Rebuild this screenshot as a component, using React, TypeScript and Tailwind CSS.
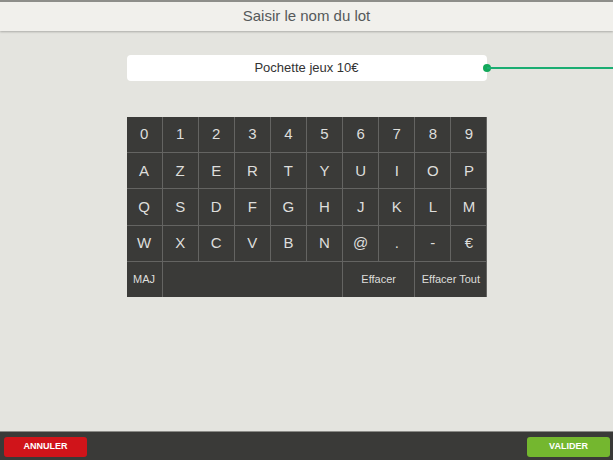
import { useState } from "react";

const rows = [
  ["0", "1", "2", "3", "4", "5", "6", "7", "8", "9"],
  ["A", "Z", "E", "R", "T", "Y", "U", "I", "O", "P"],
  ["Q", "S", "D", "F", "G", "H", "J", "K", "L", "M"],
  ["W", "X", "C", "V", "B", "N", "@", ".", "-", "€"],
];

export default function App() {
  const [value, setValue] = useState("Pochette jeux 10€");
  const [upper, setUpper] = useState(true);

  const press = (k: string) => setValue((v) => v + (upper ? k : k.toLowerCase()));

  return (
    <div className="flex h-[460px] w-full flex-col overflow-hidden bg-[#e4e4df] font-['Liberation_Sans',Arial,sans-serif]">
      <header className="relative z-10 flex h-[31px] shrink-0 items-center justify-center border-t-2 border-[#8e8e8a] bg-[#f1f0ec] shadow-[0_1px_2px_rgba(0,0,0,0.25)]">
        <h1 className="text-[15px] text-[#55595a]">Saisir le nom du lot</h1>
      </header>

      <main className="flex flex-1 flex-col items-center pt-[24px]">
        <div className="relative w-[360px]">
          <div className="flex h-[26px] items-center justify-center rounded-[4px] bg-white text-[13px] text-[#333]">
            {value}
          </div>
          {/* connector going off to the right edge */}
          <span className="absolute left-[356px] top-[9px] h-2 w-2 rounded-full bg-[#12a85a]" />
          <span className="absolute left-[360px] top-[12px] h-[2px] w-[200px] bg-[#1aad72]" />
        </div>

        <div className="mt-[36px] grid h-[180px] w-[360px] grid-cols-10 grid-rows-5 gap-px bg-[#646462] text-[15px] text-[#dededc]">
          {rows.flat().map((k) => (
            <button key={k} onClick={() => press(k)} className="flex items-center justify-center bg-[#3a3a38]">
              {k}
            </button>
          ))}
          <button onClick={() => setUpper((u) => !u)} className="flex items-center justify-center bg-[#3a3a38] text-[11px]">
            MAJ
          </button>
          <button onClick={() => setValue((v) => v + " ")} className="col-span-5 bg-[#3a3a38]" />
          <button onClick={() => setValue((v) => v.slice(0, -1))} className="col-span-2 flex items-center justify-center bg-[#3a3a38] text-[11px]">
            Effacer
          </button>
          <button onClick={() => setValue("")} className="col-span-2 flex items-center justify-center bg-[#3a3a38] text-[11px]">
            Effacer Tout
          </button>
        </div>
      </main>

      <footer className="flex h-[29px] shrink-0 items-end justify-between border-t border-[#8a8a86] bg-[#3a3a38] pb-[3px] pl-[4px] pr-[3px]">
        <button className="flex h-[20px] w-[83px] items-center justify-center rounded-[3px] bg-[#d0141a] text-[9px] font-bold text-white">
          ANNULER
        </button>
        <button className="flex h-[20px] w-[83px] items-center justify-center rounded-[3px] bg-[#74b72f] text-[9px] font-bold text-white">
          VALIDER
        </button>
      </footer>
    </div>
  );
}
